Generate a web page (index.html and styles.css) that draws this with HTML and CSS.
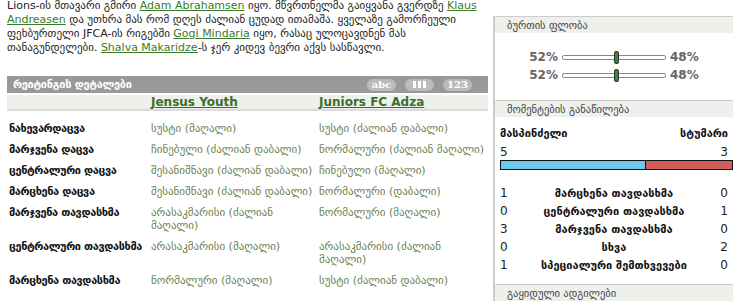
FILE: index.html
```html
<!DOCTYPE html>
<html>
<head>
<title>მატჩის ანგარიში</title>
<link rel="stylesheet" href="styles.css">
</head>
<body>

<div class="page">
  <div class="main">
    <p class="story">Lions-ის მთავარი გმირი <a href="#">Adam Abrahamsen</a> იყო. მწვრთნელმა გაიყვანა გვერდზე <a href="#">Klaus Andreasen</a> და უთხრა მას რომ დღეს ძალიან ცუდად ითამაშა. ყველაზე გამორჩეული ფეხბურთელი JFCA-ის რიგებში <a href="#">Gogi Mindaria</a> იყო, რასაც ულოცავდნენ მას თანაგუნდელები. <a href="#">Shalva Makaridze</a>-ს ჯერ კიდევ ბევრი აქვს სასწავლი.</p>

    <div class="ratings">
      <div class="ratings-head">
        <span class="ratings-title">რეიტინგის დეტალები</span>
        <div class="toggles">
          <span class="toggle toggle-abc">abc</span>
          <span class="toggle toggle-bars">
            <svg width="14" height="7" viewBox="0 0 14 7"><rect x="0" y="0" width="3" height="7"/><rect x="5" y="0" width="3" height="7"/><rect x="10" y="0" width="3" height="7"/></svg>
          </span>
          <span class="toggle toggle-num">123</span>
        </div>
      </div>
      <table class="ratings-table">
        <thead>
          <tr>
            <th></th>
            <th><a href="#">Jensus Youth</a></th>
            <th><a href="#">Juniors FC Adza</a></th>
          </tr>
        </thead>
        <tbody>
          <tr><td class="label">ნახევარდაცვა</td><td>სუსტი (მაღალი)</td><td>სუსტი (ძალიან დაბალი)</td></tr>
          <tr><td class="label">მარჯვენა დაცვა</td><td>ჩინებული (ძალიან დაბალი)</td><td>ნორმალური (ძალიან მაღალი)</td></tr>
          <tr><td class="label">ცენტრალური დაცვა</td><td>შესანიშნავი (ძალიან დაბალი)</td><td>ჩინებული (მაღალი)</td></tr>
          <tr><td class="label">მარცხენა დაცვა</td><td>შესანიშნავი (ძალიან დაბალი)</td><td>ნორმალური (დაბალი)</td></tr>
          <tr><td class="label">მარჯვენა თავდასხმა</td><td>არასაკმარისი (ძალიან მაღალი)</td><td>ნორმალური (მაღალი)</td></tr>
          <tr><td class="label">ცენტრალური თავდასხმა</td><td>არასაკმარისი (მაღალი)</td><td>არასაკმარისი (ძალიან მაღალი)</td></tr>
          <tr><td class="label">მარცხენა თავდასხმა</td><td>ნორმალური (მაღალი)</td><td>სუსტი (ძალიან დაბალი)</td></tr>
        </tbody>
      </table>
    </div>
  </div>

  <div class="side">
    <div class="box">
      <h3 class="box-head">ბურთის ფლობა</h3>
      <div class="possession">
        <div class="poss-row">
          <span class="pct">52%</span>
          <span class="track"><span class="thumb" style="left: 52%"></span></span>
          <span class="pct">48%</span>
        </div>
        <div class="poss-row">
          <span class="pct">52%</span>
          <span class="track"><span class="thumb" style="left: 52%"></span></span>
          <span class="pct">48%</span>
        </div>
      </div>
    </div>

    <div class="box">
      <h3 class="box-head">მომენტების განაწილება</h3>
      <div class="chances">
        <div class="chance-teams">
          <span>მასპინძელი</span>
          <span>სტუმარი</span>
        </div>
        <div class="chance-totals">
          <span>5</span>
          <span>3</span>
        </div>
        <div class="chance-bar">
          <span class="bar-home" style="width: 62.5%"></span>
          <span class="bar-away"></span>
        </div>
        <table class="chance-table">
          <tr><td>1</td><td class="kind">მარცხენა თავდასხმა</td><td>0</td></tr>
          <tr><td>0</td><td class="kind">ცენტრალური თავდასხმა</td><td>1</td></tr>
          <tr><td>3</td><td class="kind">მარჯვენა თავდასხმა</td><td>0</td></tr>
          <tr><td>0</td><td class="kind">სხვა</td><td>2</td></tr>
          <tr><td>1</td><td class="kind">სპეციალური შემთხვევები</td><td>0</td></tr>
        </table>
      </div>
    </div>

    <div class="box">
      <h3 class="box-head">გაყიდული ადგილები</h3>
    </div>
  </div>
</div>

</body>
</html>
```

FILE: styles.css
```css
body {
  margin: 0;
  font-family: "DejaVu Sans", Verdana, sans-serif;
  font-size: 11px;
  color: #222;
  background: #fff;
}

a {
  color: #3b7a2a;
}

.page {
  display: flex;
  gap: 5px;
}

.main {
  width: 481px;
  padding-left: 7px;
}

.story {
  margin: -1px 0 0;
  line-height: 14px;
}

.ratings {
  margin-top: 21px;
}

.ratings-head {
  display: flex;
  justify-content: space-between;
  align-items: center;
  height: 17px;
  padding: 0 16px 0 6px;
  background-color: #999;
  color: #fff;
}

.ratings-title {
  font-size: 11px;
  font-weight: bold;
  letter-spacing: -0.3px;
}

.toggles {
  display: flex;
  gap: 9px;
}

.toggle {
  display: flex;
  justify-content: center;
  align-items: center;
  width: 29px;
  height: 12px;
  border-radius: 6px;
  background-color: #bbb;
  color: #fff;
  font-family: "DejaVu Serif", serif;
  font-weight: bold;
  font-size: 10px;
}

.toggle svg {
  fill: #fff;
}

.ratings-table {
  width: 100%;
  border-collapse: collapse;
  margin-top: 2px;
}

.ratings-table th {
  text-align: left;
  height: 14px;
  padding: 0 2px;
  background-color: #eef0ec;
  border-bottom: 2px solid #dcdcdc;
  font-size: 12px;
}

.ratings-table th a {
  color: #3b6e2a;
}

.ratings-table th:first-child {
  width: 138px;
}

.ratings-table th:nth-child(2) {
  width: 164px;
}

.ratings-table td {
  vertical-align: top;
  padding: 4px 2px;
  line-height: 13px;
  color: #6d8251;
}

.ratings-table tbody tr:first-child td {
  padding-top: 11px;
}

.ratings-table td.label {
  color: #111;
  font-weight: bold;
  white-space: nowrap;
  letter-spacing: -0.4px;
}

.side {
  width: 238px;
  margin-top: 16px;
  border-left: 2px solid #ccc;
}

.box-head {
  margin: 0;
  height: 16px;
  line-height: 16px;
  padding-left: 12px;
  border-top: 1px solid #ccc;
  background-color: #eef0ec;
  color: #444;
  font-weight: normal;
  font-size: 10.5px;
}

.possession {
  padding: 15px 0 16px;
}

.poss-row {
  display: flex;
  justify-content: center;
  align-items: center;
  gap: 4px;
  height: 18px;
}

.pct {
  color: #666;
  font-weight: bold;
  font-size: 12px;
}

.track {
  position: relative;
  width: 102px;
  height: 3px;
  border: 1px solid #888;
  border-radius: 2px;
  background-color: #fff;
}

.thumb {
  position: absolute;
  top: -5px;
  width: 3px;
  height: 11px;
  margin-left: -2px;
  border: 1px solid #333;
  border-radius: 2px;
  background-color: #2e8b3a;
}

.chances {
  padding: 10px 0 10px 5px;
}

.chance-teams,
.chance-totals {
  display: flex;
  justify-content: space-between;
  padding-right: 5px;
}

.chance-teams {
  font-weight: bold;
  color: #111;
}

.chance-totals {
  margin-top: 5px;
  font-size: 12px;
}

.chance-bar {
  display: flex;
  height: 8px;
  margin-top: 1px;
  border: 1px solid #111;
}

.bar-home {
  background-color: #6cc9ea;
  border-right: 1px solid #111;
}

.bar-away {
  flex: 1;
  background-color: #d05c5c;
}

.chance-table {
  width: 100%;
  margin-top: 14px;
  border-collapse: collapse;
}

.chance-table td {
  height: 18px;
  padding: 0 5px 0 0;
  font-size: 12px;
}

.chance-table td:last-child {
  text-align: right;
}

.chance-table td.kind {
  text-align: center;
  font-weight: bold;
  font-size: 11px;
  color: #111;
}
```
